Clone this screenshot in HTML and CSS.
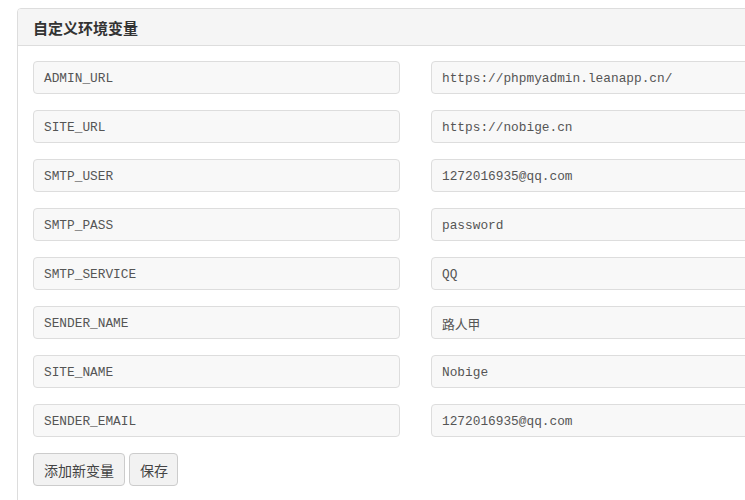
FILE: index.html
```html
<!DOCTYPE html>
<html>
<head>
<meta charset="utf-8">
<link rel="stylesheet" href="styles.css">
</head>
<body>
<div class="page">
  <div class="panel">
    <div class="panel-heading">自定义环境变量</div>
    <div class="panel-body">
      <div class="vars">
        <div class="field">ADMIN_URL</div><div class="field">https://phpmyadmin.leanapp.cn/</div>
        <div class="field">SITE_URL</div><div class="field">https://nobige.cn</div>
        <div class="field">SMTP_USER</div><div class="field">1272016935@qq.com</div>
        <div class="field">SMTP_PASS</div><div class="field">password</div>
        <div class="field">SMTP_SERVICE</div><div class="field">QQ</div>
        <div class="field">SENDER_NAME</div><div class="field">路人甲</div>
        <div class="field">SITE_NAME</div><div class="field">Nobige</div>
        <div class="field">SENDER_EMAIL</div><div class="field">1272016935@qq.com</div>
      </div>
      <div class="actions">
        <button class="btn">添加新变量</button>
        <button class="btn">保存</button>
      </div>
    </div>
  </div>
</div>
</body>
</html>
```

FILE: styles.css
```css
html, body {
  margin: 0;
  padding: 0;
  background: #fff;
  overflow: hidden;
}
.page {
  width: 745px;
  height: 500px;
  padding: 8px 0 0 17px;
  box-sizing: border-box;
  overflow: hidden;
  font-family: "Open Sans", "Noto Sans CJK SC", sans-serif;
}
.panel {
  width: 798px;
  border: 1px solid #ddd;
  border-radius: 4px;
  background: #fff;
}
.panel-heading {
  background: #f5f5f5;
  border-bottom: 1px solid #ddd;
  border-radius: 3px 3px 0 0;
  height: 37px;
  box-sizing: border-box;
  padding: 0 15px;
  display: flex;
  align-items: center;
  font-size: 15px;
  font-weight: bold;
  color: #333;
  font-family: "Noto Sans CJK SC", sans-serif;
}
.panel-body {
  padding: 15px 15px 20px 15px;
}
.vars {
  display: grid;
  grid-template-columns: 367px 367px;
  column-gap: 31px;
  row-gap: 16px;
}
.field {
  height: 33px;
  box-sizing: border-box;
  border: 1px solid #ddd;
  border-radius: 4px;
  background: #f8f8f8;
  padding: 1px 10px 0 10px;
  display: flex;
  align-items: center;
  font-family: "Liberation Mono", "Noto Sans CJK SC", monospace;
  font-size: 12.8px;
  color: #555;
}
.actions {
  margin-top: 16px;
  display: flex;
  gap: 4px;
}
.btn {
  height: 33px;
  width: auto;
  padding: 0 10px;
  border: 1px solid #ccc;
  border-radius: 4px;
  background: #f2f2f2;
  color: #444;
  font-family: "Noto Sans CJK SC", sans-serif;
  font-size: 14px;
  margin: 0;
}
.btn + .btn {
  padding: 0 9px 0 10px;
}
```
